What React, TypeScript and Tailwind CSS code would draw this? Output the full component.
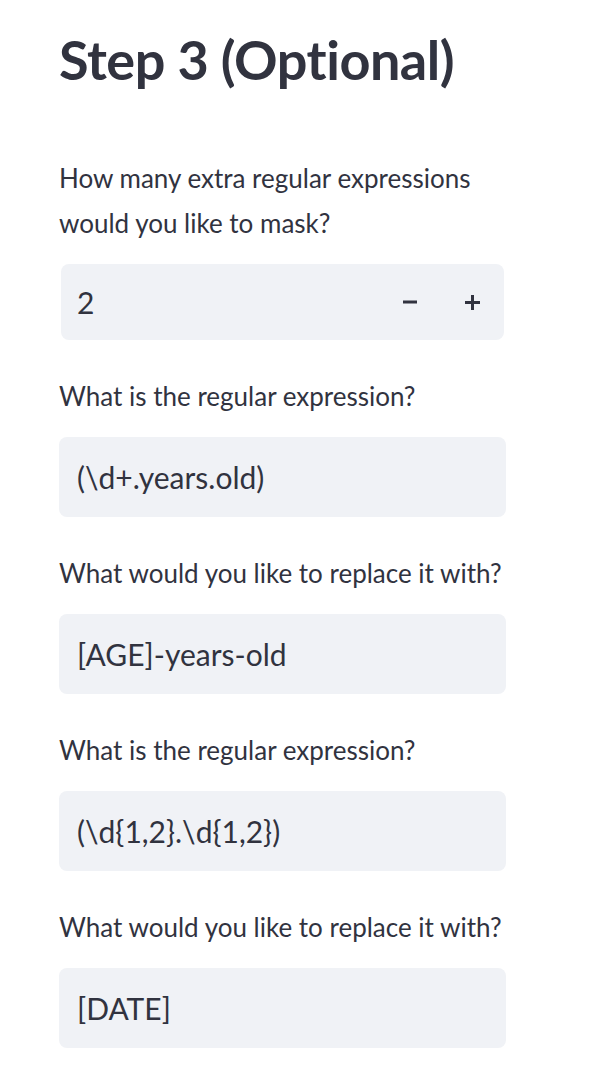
import React from 'react';

const fields = [
  { label: 'What is the regular expression?', value: '(\\d+.years.old)' },
  { label: 'What would you like to replace it with?', value: '[AGE]-years-old' },
  { label: 'What is the regular expression?', value: '(\\d{1,2}.\\d{1,2})' },
  { label: 'What would you like to replace it with?', value: '[DATE]' },
];

const Minus = () => (
  <svg width="16" height="16" viewBox="0 0 16 16" fill="none">
    <path d="M1 8h14" stroke="#31333f" strokeWidth="3" />
  </svg>
);

const Plus = () => (
  <svg width="17" height="17" viewBox="0 0 17 17" fill="none">
    <path d="M1 8.5h15M8.5 1v15" stroke="#31333f" strokeWidth="3" />
  </svg>
);

export default function App() {
  return (
    <div
      className="min-h-screen bg-white pl-[59px] pt-[27px] text-[#31333f]"
      style={{ fontFamily: '"Source Sans Pro", Lato, sans-serif' }}
    >
      <div className="w-[447px]">
        <h2 className="text-[54px] font-bold leading-[65px] tracking-[-0.5px]">Step 3 (Optional)</h2>

        {/* number input */}
        <div className="mt-[64px] mb-[3px]">
          <label className="block text-[26px] leading-[45px]">
            How many extra regular expressions would you like to mask?
          </label>
          <div className="mx-[2px] mt-[18px] flex h-[76px] items-center rounded-lg bg-[#f0f2f6]">
            <input
              className="h-full min-w-0 flex-1 bg-transparent pl-[16px] text-[30px] outline-none"
              defaultValue="2"
            />
            <button className="flex h-full w-[63px] items-center justify-center">
              <Minus />
            </button>
            <button className="flex h-full w-[63px] items-center justify-center">
              <Plus />
            </button>
          </div>
        </div>

        {fields.map((f, i) => (
          <div key={i} className="mt-[34px]">
            <label className="block text-[26px] leading-[45px]">{f.label}</label>
            <input
              className="mt-[18px] block h-[80px] w-full rounded-lg bg-[#f0f2f6] px-[18px] text-[30px] outline-none"
              defaultValue={f.value}
            />
          </div>
        ))}
      </div>
    </div>
  );
}
